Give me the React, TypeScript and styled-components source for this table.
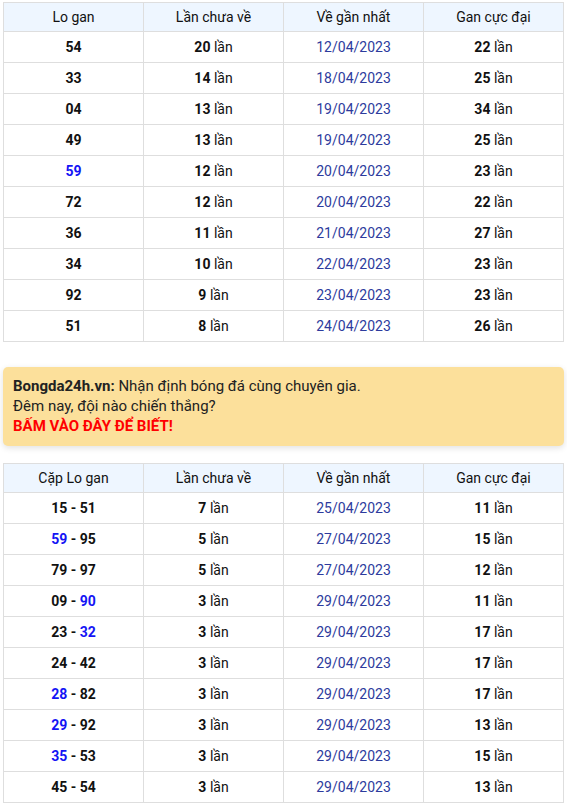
import React from "react";
import styled, { createGlobalStyle } from "styled-components";

const GlobalStyle = createGlobalStyle`
  html, body { margin: 0; padding: 0; background: #fff; }
  body { font-family: Roboto, "Noto Sans", Arial, sans-serif; font-size: 14px; color: #222; }
`;

const Page = styled.div`
  padding: 2px 3px 4px 3px;
  width: 561px;
  display: flex;
  flex-direction: column;
`;

const Table = styled.table`
  width: 561px;
  border-collapse: collapse;
  table-layout: fixed;
`;

const Th = styled.th`
  height: 28px;
  padding: 0;
  background: #eef6ff;
  border: 1px solid #dedede;
  font-weight: 400;
  color: #111;
  text-align: center;
  font-size: 14px;
`;

const Td = styled.td`
  height: 30px;
  padding: 0;
  border: 1px solid #dedede;
  text-align: center;
  color: #111;
  font-size: 14px;
`;

const Num = styled.b<{ $hi?: boolean }>`
  font-weight: 700;
  color: ${(p) => (p.$hi ? "#1414f5" : "#111")};
`;

const DateText = styled.span`
  color: #2d3b9d;
`;

const Banner = styled.div`
  margin: 25px 0 17px 0;
  background: #fce09b;
  border-radius: 5px;
  box-shadow: 0 2px 6px rgba(0, 0, 0, 0.12);
  padding: 9px 10px 10px 10px;
  line-height: 20px;
  color: #222;
  font-size: 15px;
`;

const BannerLine = styled.div``;

const Brand = styled.b`
  font-weight: 700;
  color: #222;
`;

const Cta = styled.div`
  font-weight: 700;
  color: #f00;
`;

type Row = { a: React.ReactNode; b: number; date: string; c: number };

const Pair = ({ x, y, hx, hy }: { x: string; y: string; hx?: boolean; hy?: boolean }) => (
  <>
    <Num $hi={hx}>{x}</Num>
    <Num> - </Num>
    <Num $hi={hy}>{y}</Num>
  </>
);

const rows1: Row[] = [
  { a: <Num>54</Num>, b: 20, date: "12/04/2023", c: 22 },
  { a: <Num>33</Num>, b: 14, date: "18/04/2023", c: 25 },
  { a: <Num>04</Num>, b: 13, date: "19/04/2023", c: 34 },
  { a: <Num>49</Num>, b: 13, date: "19/04/2023", c: 25 },
  { a: <Num $hi>59</Num>, b: 12, date: "20/04/2023", c: 23 },
  { a: <Num>72</Num>, b: 12, date: "20/04/2023", c: 22 },
  { a: <Num>36</Num>, b: 11, date: "21/04/2023", c: 27 },
  { a: <Num>34</Num>, b: 10, date: "22/04/2023", c: 23 },
  { a: <Num>92</Num>, b: 9, date: "23/04/2023", c: 23 },
  { a: <Num>51</Num>, b: 8, date: "24/04/2023", c: 26 },
];

const rows2: Row[] = [
  { a: <Pair x="15" y="51" />, b: 7, date: "25/04/2023", c: 11 },
  { a: <Pair x="59" y="95" hx />, b: 5, date: "27/04/2023", c: 15 },
  { a: <Pair x="79" y="97" />, b: 5, date: "27/04/2023", c: 12 },
  { a: <Pair x="09" y="90" hy />, b: 3, date: "29/04/2023", c: 11 },
  { a: <Pair x="23" y="32" hy />, b: 3, date: "29/04/2023", c: 17 },
  { a: <Pair x="24" y="42" />, b: 3, date: "29/04/2023", c: 17 },
  { a: <Pair x="28" y="82" hx />, b: 3, date: "29/04/2023", c: 17 },
  { a: <Pair x="29" y="92" hx />, b: 3, date: "29/04/2023", c: 13 },
  { a: <Pair x="35" y="53" hx />, b: 3, date: "29/04/2023", c: 15 },
  { a: <Pair x="45" y="54" />, b: 3, date: "29/04/2023", c: 13 },
];

const GanTable = ({ first, rows }: { first: string; rows: Row[] }) => (
  <Table>
    <thead>
      <tr>
        <Th>{first}</Th>
        <Th>Lần chưa về</Th>
        <Th>Về gần nhất</Th>
        <Th>Gan cực đại</Th>
      </tr>
    </thead>
    <tbody>
      {rows.map((r, i) => (
        <tr key={i}>
          <Td>{r.a}</Td>
          <Td>
            <Num>{r.b}</Num> lần
          </Td>
          <Td>
            <DateText>{r.date}</DateText>
          </Td>
          <Td>
            <Num>{r.c}</Num> lần
          </Td>
        </tr>
      ))}
    </tbody>
  </Table>
);

export default function App() {
  return (
    <>
      <GlobalStyle />
      <Page>
        <GanTable first="Lo gan" rows={rows1} />
        <Banner>
          <BannerLine>
            <Brand>Bongda24h.vn:</Brand> Nhận định bóng đá cùng chuyên gia.
          </BannerLine>
          <BannerLine>Đêm nay, đội nào chiến thắng?</BannerLine>
          <Cta>BẤM VÀO ĐÂY ĐỂ BIẾT!</Cta>
        </Banner>
        <GanTable first="Cặp Lo gan" rows={rows2} />
      </Page>
    </>
  );
}
